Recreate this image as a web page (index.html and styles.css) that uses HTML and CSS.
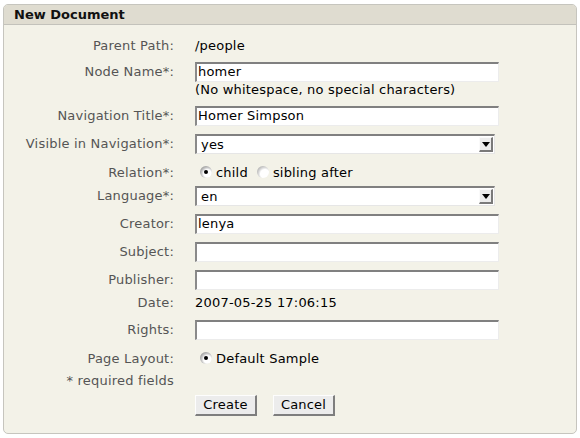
FILE: index.html
```html
<!DOCTYPE html>
<html>
<head>
<meta charset="utf-8">
<link rel="stylesheet" href="styles.css">
</head>
<body>
<div class="panel">
  <div class="panel-head">New Document</div>
  <div class="form">
    <div class="label">Parent Path:</div>
    <div class="value text">/people</div>

    <div class="label top">Node Name*:</div>
    <div class="value">
      <div class="field">homer</div>
      <div class="hint">(No whitespace, no special characters)</div>
    </div>

    <div class="label">Navigation Title*:</div>
    <div class="value"><div class="field">Homer Simpson</div></div>

    <div class="label">Visible in Navigation*:</div>
    <div class="value"><div class="select"><span class="sel-text">yes</span><span class="sel-btn"><span class="tri"></span></span></div></div>

    <div class="label shift3">Relation*:</div>
    <div class="value radios shift3">
      <span class="radio checked"></span><span class="rlabel">child</span>
      <span class="radio"></span><span class="rlabel">sibling after</span>
    </div>

    <div class="label">Language*:</div>
    <div class="value"><div class="select"><span class="sel-text">en</span><span class="sel-btn"><span class="tri"></span></span></div></div>

    <div class="label">Creator:</div>
    <div class="value"><div class="field">lenya</div></div>

    <div class="label">Subject:</div>
    <div class="value"><div class="field"></div></div>

    <div class="label">Publisher:</div>
    <div class="value"><div class="field"></div></div>

    <div class="label date-row">Date:</div>
    <div class="value text date-row">2007-05-25 17:06:15</div>

    <div class="label">Rights:</div>
    <div class="value"><div class="field"></div></div>

    <div class="label shift2">Page Layout:</div>
    <div class="value radios shift2">
      <span class="radio checked"></span><span class="rlabel">Default Sample</span>
    </div>

    <div class="label">* required fields</div>
    <div class="value"></div>

    <div class="label"></div>
    <div class="value buttons">
      <span class="btn">Create</span>
      <span class="btn">Cancel</span>
    </div>
  </div>
</div>
</body>
</html>
```

FILE: styles.css
```css
html, body {
  margin: 0;
  padding: 0;
  background: #ffffff;
}
body {
  font-family: "DejaVu Sans", Verdana, sans-serif;
  font-size: 13px;
  letter-spacing: 0.2px;
  color: #000;
}
.panel {
  margin: 4px 3px 0 3px;
  width: 572px;
  height: 428px;
  border: 1px solid #c6c5be;
  border-radius: 5px;
  background: #f3f2e8;
  overflow: hidden;
}
.panel-head {
  height: 19px;
  background: #dfdcd0;
  border-bottom: 1px solid #c3c2bb;
  font-weight: bold;
  font-size: 13px;
  letter-spacing: 0;
  line-height: 20px;
  padding-left: 10px;
  color: #111;
}
.form {
  display: grid;
  grid-template-columns: 170px 304px;
  column-gap: 21px;
  row-gap: 8px;
  padding-top: 13px;
  align-items: center;
}
.label {
  text-align: right;
  color: #555;
  line-height: 16px;
}
.label.top {
  align-self: start;
  padding-top: 2px;
}
.value.text {
  line-height: 16px;
}
.date-row {
  margin-top: -3px;
  margin-bottom: 1px;
}
.shift3 {
  padding-top: 3px;
  margin-bottom: -3px;
}
.shift2 {
  padding-top: 3px;
  margin-bottom: -2px;
}
.field {
  box-sizing: border-box;
  height: 20px;
  width: 304px;
  background: #fff;
  border-top: 2px solid #808080;
  border-left: 2px solid #8a8a8a;
  border-right: 1px solid #ececec;
  border-bottom: 1px solid #ececec;
  padding-left: 1px;
  line-height: 16px;
}
.hint {
  line-height: 16px;
}
.select {
  box-sizing: border-box;
  height: 20px;
  width: 300px;
  background: #fff;
  border-top: 2px solid #808080;
  border-left: 2px solid #8a8a8a;
  border-right: 1px solid #e6e6e6;
  border-bottom: 1px solid #e6e6e6;
  display: flex;
  align-items: center;
  justify-content: space-between;
  padding: 0 1px 0 4px;
}
.sel-text {
  line-height: 16px;
}
.sel-btn {
  box-sizing: border-box;
  width: 14px;
  height: 15px;
  background: #ececec;
  border-top: 1px solid #fafafa;
  border-left: 1px solid #fafafa;
  border-right: 2px solid #7a7a7a;
  border-bottom: 2px solid #7a7a7a;
  display: flex;
  align-items: center;
  justify-content: center;
}
.tri {
  width: 0;
  height: 0;
  border-left: 4px solid transparent;
  border-right: 4px solid transparent;
  border-top: 5px solid #000;
  margin-top: 1px;
}
.radios {
  display: flex;
  align-items: center;
  height: 16px;
  padding-left: 5px;
}
.radio {
  width: 12px;
  height: 12px;
  border-radius: 50%;
  background: radial-gradient(circle at 66% 66%, #ffffff 0 40%, #d6d6d6 58%, #8e8e8e 100%);
  margin-right: 4px;
  margin-top: -3px;
  position: relative;
  flex: none;
}
.radio.checked {
  background: radial-gradient(circle at 62% 62%, #ffffff 0 36%, #c4c4c4 56%, #6e6e6e 100%);
}
.radio.checked::after {
  content: "";
  position: absolute;
  left: 4px;
  top: 4px;
  width: 4px;
  height: 4px;
  border-radius: 50%;
  background: #000;
}
.rlabel {
  margin-right: 9px;
  line-height: 16px;
}
.buttons {
  display: flex;
  gap: 16px;
  margin-top: -2px;
}
.btn {
  box-sizing: border-box;
  width: 62px;
  height: 21px;
  background: #ececec;
  border-top: 1px solid #fdfdfd;
  border-left: 1px solid #fdfdfd;
  border-right: 2px solid #7e7e7e;
  border-bottom: 2px solid #7e7e7e;
  text-align: center;
  line-height: 18px;
}
```
